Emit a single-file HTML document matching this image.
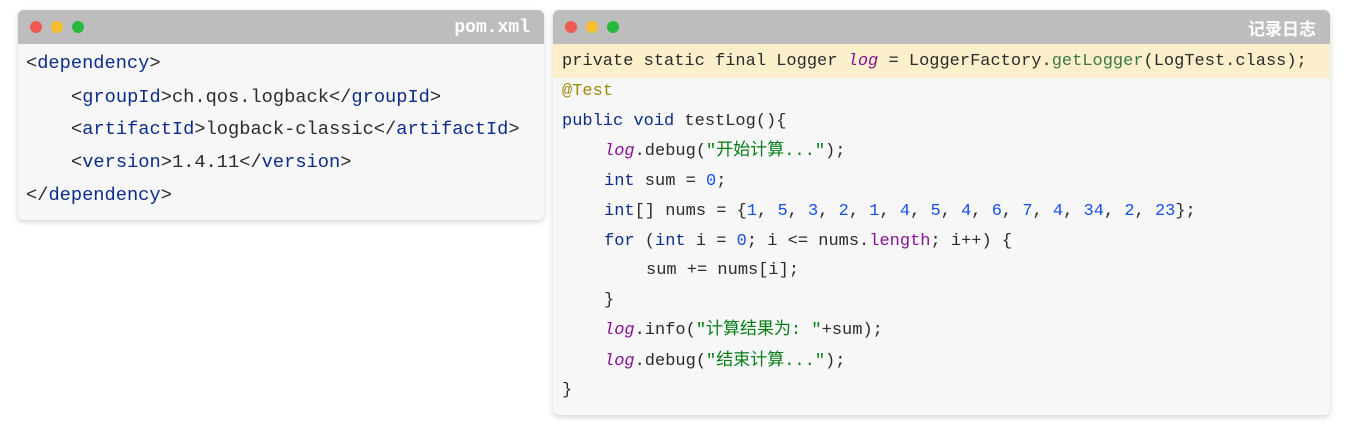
<!DOCTYPE html>
<html><head><meta charset="utf-8"><style>
body{margin:0;width:1357px;height:448px;background:#fff;position:relative;overflow:hidden;font-family:"Liberation Mono","Noto Sans CJK SC",monospace;}
.win{position:absolute;background:#f7f7f7;border-radius:6px;box-shadow:0 2px 6px rgba(0,0,0,.18);overflow:hidden}
.bar{height:34px;background:#bdbdbd;position:relative}
.dot{position:absolute;top:11px;width:12px;height:12px;border-radius:50%}
.t{position:absolute;right:14px;top:8px;line-height:20px;color:#fff;font-weight:bold;font-size:17px}
.l{position:absolute;white-space:pre;color:#2b2b2b;line-height:20px}
.k{color:#0b2d8a}.n{color:#1750eb}.s{color:#067d17}.lg{color:#871094;font-style:italic}.f{color:#3a7a4a}.p{color:#871094}.a{color:#9e880d}
</style></head><body>
<div class="win" style="left:18px;top:10px;width:526px;height:210px">
<div class="bar"><div class="dot" style="left:12px;background:#ee5a52"></div><div class="dot" style="left:33px;background:#f5be2f"></div><div class="dot" style="left:54px;background:#27b83e"></div><div class="t" style="font-family:'Liberation Mono',monospace;font-size:18px">pom.xml</div></div>
<div style="font-size:18.7px">
<div class="l" style="left:8px;top:43px">&lt;<span class="k">dependency</span>&gt;</div>
<div class="l" style="left:53px;top:77px">&lt;<span class="k">groupId</span>&gt;ch.qos.logback&lt;/<span class="k">groupId</span>&gt;</div>
<div class="l" style="left:53px;top:109px">&lt;<span class="k">artifactId</span>&gt;logback-classic&lt;/<span class="k">artifactId</span>&gt;</div>
<div class="l" style="left:53px;top:142px">&lt;<span class="k">version</span>&gt;1.4.11&lt;/<span class="k">version</span>&gt;</div>
<div class="l" style="left:8px;top:175px">&lt;/<span class="k">dependency</span>&gt;</div>
</div></div>
<div class="win" style="left:553px;top:10px;width:777px;height:405px">
<div class="bar"><div class="dot" style="left:12px;background:#ee5a52"></div><div class="dot" style="left:33px;background:#f5be2f"></div><div class="dot" style="left:54px;background:#27b83e"></div><div class="t" style="font-family:'Noto Sans CJK SC',sans-serif">记录日志</div></div>
<div style="position:absolute;left:0;top:34px;width:777px;height:34px;background:#fbefcc"></div>
<div style="font-size:17px">
<div class="l" style="left:9px;top:42px">private static final Logger <span class="lg">log</span> = LoggerFactory.<span class="f">getLogger</span>(LogTest.class);</div>
<div class="l a" style="left:9px;top:72px">@Test</div>
<div class="l" style="left:9px;top:102px"><span class="k">public void</span> testLog(){</div>
<div class="l" style="left:51px;top:132px"><span class="lg">log</span>.debug(<span class="s">"开始计算..."</span>);</div>
<div class="l" style="left:51px;top:162px"><span class="k">int</span> sum = <span class="n">0</span>;</div>
<div class="l" style="left:51px;top:192px"><span class="k">int</span>[] nums = {<span class="n">1</span>, <span class="n">5</span>, <span class="n">3</span>, <span class="n">2</span>, <span class="n">1</span>, <span class="n">4</span>, <span class="n">5</span>, <span class="n">4</span>, <span class="n">6</span>, <span class="n">7</span>, <span class="n">4</span>, <span class="n">34</span>, <span class="n">2</span>, <span class="n">23</span>};</div>
<div class="l" style="left:51px;top:222px"><span class="k">for</span> (<span class="k">int</span> i = <span class="n">0</span>; i &lt;= nums.<span class="p">length</span>; i++) {</div>
<div class="l" style="left:93px;top:251px">sum += nums[i];</div>
<div class="l" style="left:51px;top:281px">}</div>
<div class="l" style="left:51px;top:311px"><span class="lg">log</span>.info(<span class="s">"计算结果为: "</span>+sum);</div>
<div class="l" style="left:51px;top:342px"><span class="lg">log</span>.debug(<span class="s">"结束计算..."</span>);</div>
<div class="l" style="left:9px;top:371px">}</div>
</div></div>
</body></html>
